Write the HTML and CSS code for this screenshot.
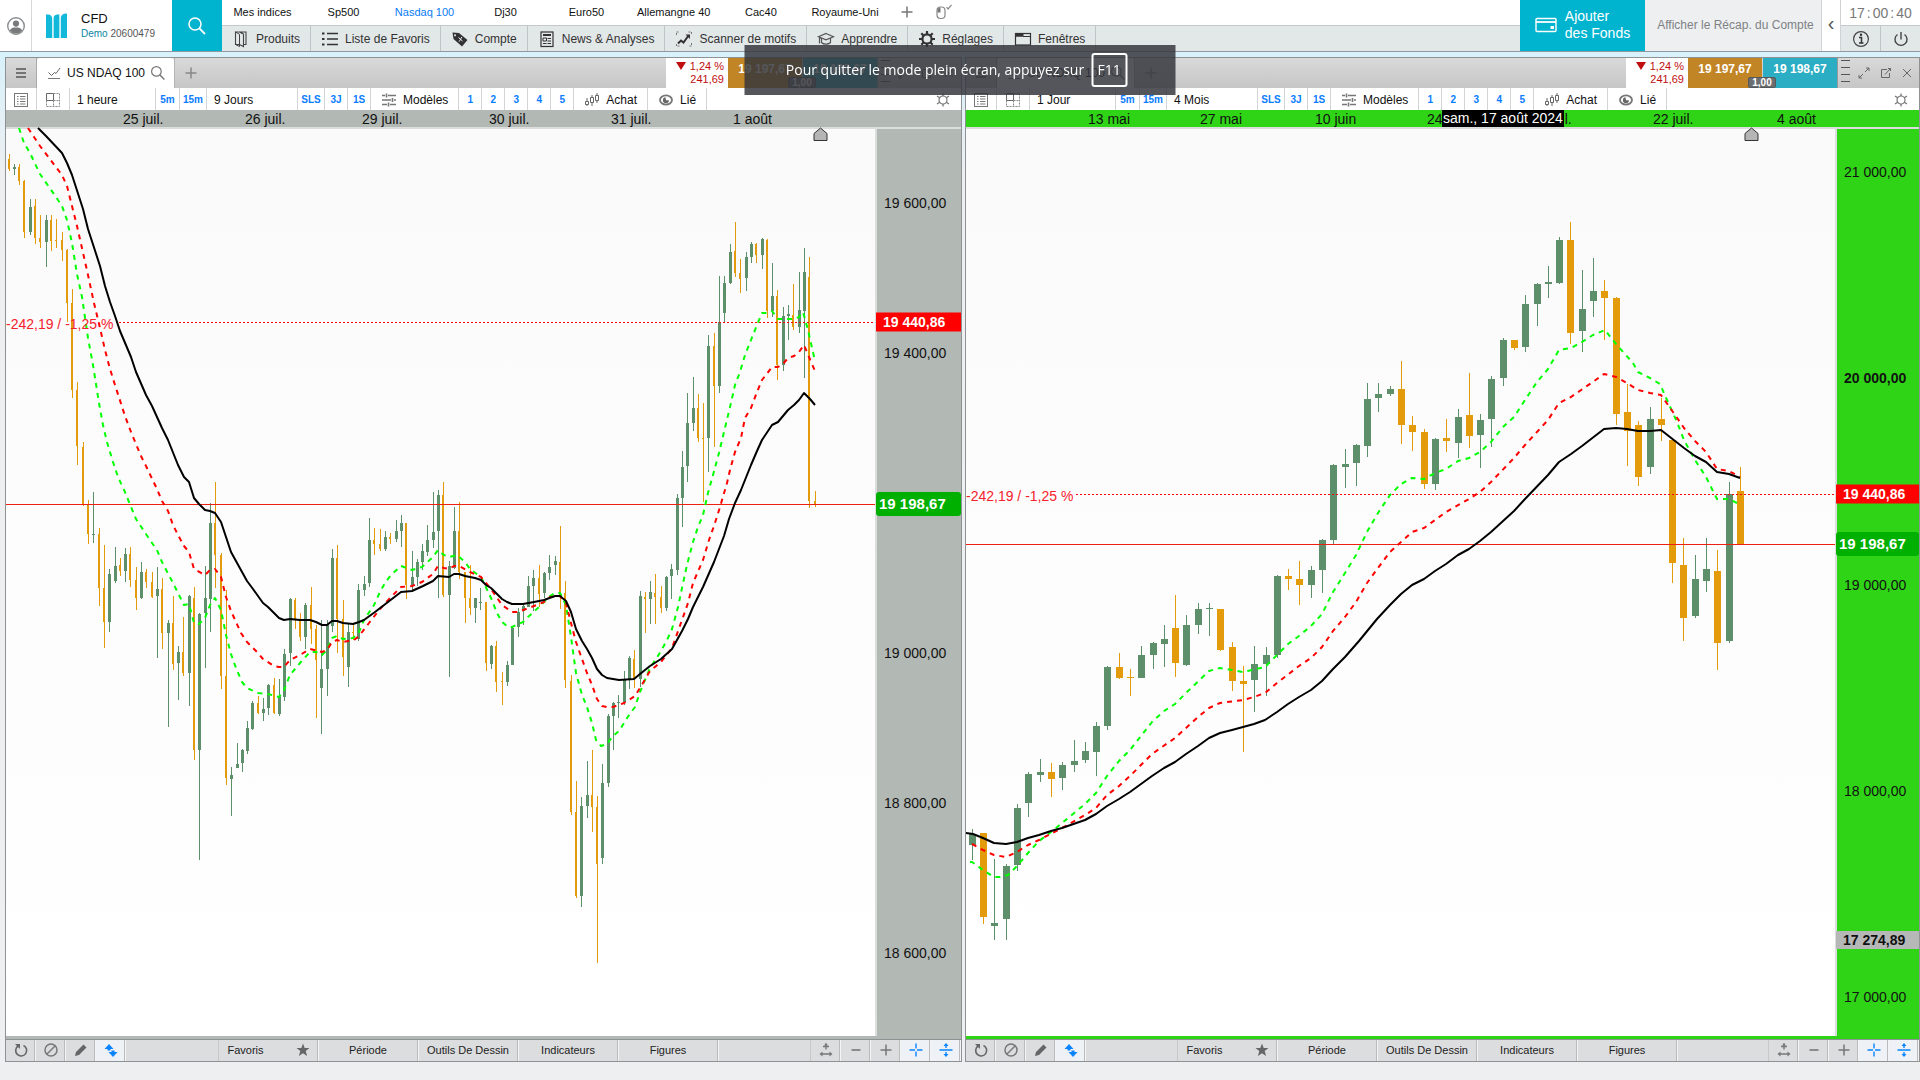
FILE: index.html
```html
<!DOCTYPE html>
<html lang="fr">
<head>
<meta charset="utf-8">
<title>US NDAQ 100 - CFD</title>
<link rel="stylesheet" href="styles.css">
</head>
<body>
<svg class="sprite" aria-hidden="true">
  <symbol id="i-user" viewBox="0 0 20 20"><circle cx="10" cy="10" r="8.3" fill="none" stroke="#8a8d8f" stroke-width="1.4"/><circle cx="10" cy="7.6" r="3.1" fill="#77797b"/><path d="M3.8 14.6c1.2-2.6 3-3 6.2-3s5 .4 6.200 3a8 8 0 0 1-12.400 0z" fill="#77797b"/></symbol>
  <symbol id="i-logo" viewBox="0 0 22 26"><path d="M0 1h2c3 0 4.500 1.500 4.500 5v19.500H0zM8 5c0-2.500 1-3.500 3.500-4H14v24.500H8zM15.500 5c0-3 1.500-4.500 5-5H22v25.500h-6.500z" fill="#12b8da"/></symbol>
  <symbol id="i-search" viewBox="0 0 20 20"><circle cx="8" cy="8" r="6" fill="none" stroke="currentColor" stroke-width="1.500"/><path d="M12.400 12.400l5.600 5.600" stroke="currentColor" stroke-width="1.800"/></symbol>
  <symbol id="i-plus" viewBox="0 0 12 12"><path d="M6 .5v11M.5 6h11" stroke="currentColor" stroke-width="1.500"/></symbol>
  <symbol id="i-mouse" viewBox="0 0 16 16"><rect x="1" y="3" width="8" height="11.500" rx="3.500" fill="none" stroke="#888" stroke-width="1.200"/><path d="M1.500 8.500V6c0-1.500 1-2.500 3-2.500v5z" fill="#777"/><path d="M10.500 3l1.600 2L15.500.8" fill="none" stroke="#888" stroke-width="1.200"/></symbol>
  <symbol id="i-book" viewBox="0 0 20 20"><path d="M4.500 3h4l4 2v12.500l-4-2H4.500zM8.500 3h6.500v12.500h-2.500" fill="none" stroke="#444" stroke-width="1.100"/><path d="M4.500 3l4 2.300V17.500l-4-2zM11 3v2" fill="none" stroke="#444"/></symbol>
  <symbol id="i-list" viewBox="0 0 20 20"><path d="M2 4.500h2.500M2 10h2.500M2 15.500h2.500" stroke="#333" stroke-width="2.200"/><path d="M7 4.500h11M7 10h11M7 15.500h11" stroke="#333" stroke-width="1.700"/></symbol>
  <symbol id="i-tag" viewBox="0 0 20 20"><path fill-rule="evenodd" d="M2.500 3.500l6.500.5 8.500 7-5.500 6.500-8.500-7.500zM5 5.200a1 1 0 1 0 .1 0z" fill="#333"/><path d="M8.500 8.500l4 3.500M11.800 8l-2.600 4.600" stroke="#e3e8ea"/></symbol>
  <symbol id="i-news" viewBox="0 0 20 20"><rect x="4" y="3" width="12" height="14.500" fill="none" stroke="#333" stroke-width="1.200"/><path d="M6 6h8" stroke="#333" stroke-width="2"/><path d="M6 9h3.500v3H6zM10.500 9.500H14M10.500 12H14M6 14.500h3.500M10.500 14.500H14" stroke="#333" fill="none"/></symbol>
  <symbol id="i-scan" viewBox="0 0 20 20"><path d="M2.500 6V3h3M14.500 3h3v3M17.500 14v3h-3M5.500 17h-3v-3" fill="none" stroke="#777" stroke-dasharray="2 1"/><path d="M4 14.500l3-3 2.500 2 5-7" fill="none" stroke="#333" stroke-width="2"/><path d="M11.500 5.500h4.500v4.500z" fill="#333"/></symbol>
  <symbol id="i-cap" viewBox="0 0 20 20"><path d="M10 4.500l7.500 3.200-7.500 3.200-7.500-3.200zM5.500 9.500v4c2 2.200 7 2.200 9 0v-4M3.500 8.500v6" fill="none" stroke="#555" stroke-width="1.200"/></symbol>
  <symbol id="i-gear" viewBox="0 0 20 20"><circle cx="10" cy="10" r="4.600" fill="none" stroke="#333" stroke-width="2.200"/><path d="M10 2v3M10 15v3M2 10h3M15 10h3M4.300 4.300l2.200 2.200M13.500 13.500l2.200 2.200M4.300 15.700l2.200-2.200M13.500 6.500l2.200-2.200" stroke="#333" stroke-width="2.200"/></symbol>
  <symbol id="i-window" viewBox="0 0 20 20"><rect x="2.500" y="4.500" width="15" height="11.500" fill="none" stroke="#333" stroke-width="1.200"/><path d="M2.500 6h8" stroke="#333" stroke-width="3.500"/><path d="M10 7.500h7.500" stroke="#333"/></symbol>
  <symbol id="i-wallet" viewBox="0 0 22 16"><rect x="1" y="1.500" width="20" height="13" rx="1" fill="none" stroke="#fff" stroke-width="1.400"/><path d="M1 5h20" stroke="#fff" stroke-width="1.800"/><rect x="15.500" y="9" width="3.500" height="3" fill="#fff"/></symbol>
  <symbol id="i-info" viewBox="0 0 20 20"><circle cx="10" cy="10" r="7.400" fill="none" stroke="#444" stroke-width="1.200"/><path d="M8 8.500h2.500V14M8 14h4.500" fill="none" stroke="#333" stroke-width="1.500"/><circle cx="10" cy="5.800" r="1.200" fill="#333"/></symbol>
  <symbol id="i-power" viewBox="0 0 20 20"><path d="M6.500 5.500a6 6 0 1 0 7 0M10 3v7.500" fill="none" stroke="#444" stroke-width="1.400"/></symbol>
  <symbol id="i-menu" viewBox="0 0 12 12"><path d="M1 2h10M1 6h10M1 10h10" stroke="#555" stroke-width="1.700"/></symbol>
  <symbol id="i-line" viewBox="0 0 14 14"><path d="M1.500 6.500l3 3 3-3 1.500 1L13 2" fill="none" stroke="#666"/><path d="M1 12.500h12" stroke="#777"/></symbol>
  <symbol id="i-rows" viewBox="0 0 16 16"><rect x="1.500" y="1.500" width="13" height="13" fill="none" stroke="#777"/><path d="M4 4.500h1.500M4 7h1.500M4 9.500h1.500M4 12h1.500M7 4.500h5.500M7 7h5.500M7 9.500h5.500M7 12h5.500" stroke="#777"/></symbol>
  <symbol id="i-grid" viewBox="0 0 16 16"><path d="M1.500 1.500h7v7h-7z" fill="none" stroke="#666"/><path d="M8.500 1.500h6v13h-13v-6M8.500 8.500v6M8.500 8.500h6" fill="none" stroke="#888" stroke-dasharray="2 1"/></symbol>
  <symbol id="i-sliders" viewBox="0 0 16 16"><path d="M1 3.500h3M7 3.500h8M1 8h9M13 8h2M1 12.500h5M9 12.500h6" stroke="#777" stroke-width="1.400"/><path d="M5.500 1.500v4M11.500 6v4M7.500 10.500v4" stroke="#777" stroke-width="1.600"/></symbol>
  <symbol id="i-candles" viewBox="0 0 16 16"><path d="M3 6v8M8 3v11M13 1v10" stroke="#666"/><path d="M1.500 9.500h3v3h-3zM6.500 5.500h3v5h-3zM11.500 3.500h3v5h-3z" fill="#fff" stroke="#666"/></symbol>
  <symbol id="i-link" viewBox="0 0 16 16"><ellipse cx="8" cy="8" rx="6" ry="4.600" fill="none" stroke="#777" stroke-width="1.800"/><path d="M7.500 5.200a3 3 0 1 0 3.400 3H8z" fill="#666"/></symbol>
  <symbol id="i-sun" viewBox="0 0 16 16"><circle cx="8" cy="8" r="4" fill="none" stroke="#777" stroke-width="1.200"/><path d="M8 1.500V4M8 12v2.500M2 4l3 2M11 10l3 2M2 12l3-2M11 6l3-2" stroke="#777" stroke-width="1.300"/></symbol>
  <symbol id="i-expand" viewBox="0 0 12 12"><path d="M7 5l4-4M8 1h3v3M5 7l-4 4M1 8v3h3" fill="none" stroke="#666"/></symbol>
  <symbol id="i-popout" viewBox="0 0 12 12"><path d="M7 2.500H1.500v8h8V6M5 7.500l5.500-6M8 1.500h2.500V4" fill="none" stroke="#666"/></symbol>
  <symbol id="i-close" viewBox="0 0 12 12"><path d="M2 2l8 8M10 2l-8 8" stroke="#666"/></symbol>
  <symbol id="i-refresh" viewBox="0 0 16 16"><path d="M5 4a5.500 5.500 0 1 0 5.500-.5" fill="none" stroke="#666" stroke-width="1.600"/><path d="M2 2h5v5z" fill="#666"/></symbol>
  <symbol id="i-ban" viewBox="0 0 16 16"><circle cx="8" cy="8" r="6" fill="none" stroke="#777" stroke-width="1.500"/><path d="M4 12l8-8" stroke="#777" stroke-width="1.500"/></symbol>
  <symbol id="i-pencil" viewBox="0 0 16 16"><path d="M2 14l1-4 7.500-7.500 3 3L6 13z" fill="#666"/></symbol>
  <symbol id="i-updown" viewBox="0 0 16 16"><path d="M1.500 7L6 2l4.500 5zM5.500 10L10 15l4.500-5z" fill="#0a84ff"/><path d="M6 6v2.500M10 8.500V11" stroke="#0a84ff" stroke-width="3"/></symbol>
  <symbol id="i-star" viewBox="0 0 16 16"><path d="M8 1.500l1.700 4.600h4.800l-3.800 3 1.400 4.900L8 11.200 3.900 14l1.400-4.900-3.800-3h4.800z" fill="#666"/></symbol>
  <symbol id="i-fit" viewBox="0 0 16 16"><path d="M8 1.500v6M5 4.500h6M3 12h10" stroke="#777" stroke-width="1.400"/><path d="M6 3.500l2-2.500 2 2.500zM1.500 12l3-2.500v5zM14.500 12l-3-2.500v5z" fill="#777"/></symbol>
  <symbol id="i-minus" viewBox="0 0 12 12"><path d="M1.500 6h9" stroke="currentColor" stroke-width="1.600"/></symbol>
  <symbol id="i-cross" viewBox="0 0 16 16"><path d="M8 1.500v5M8 9.500v5M1.500 8h5.500M9 8h5.500" stroke="#0a84ff" stroke-width="1.400"/></symbol>
  <symbol id="i-vfit" viewBox="0 0 16 16"><path d="M1.500 8h13M8 2v4M8 10v4" stroke="#0a84ff" stroke-width="1.400"/><path d="M5.500 4L8 1l2.500 3zM5.500 12L8 15l2.500-3z" fill="#0a84ff"/></symbol>
</svg>

<header class="top">
  <button class="user" aria-label="Profil"><svg class="ic20"><use href="#i-user"/></svg></button>
  <div class="brand">
    <svg class="logo"><use href="#i-logo"/></svg>
    <div><div class="brand-name">CFD</div><div class="brand-acct"><span>Demo</span> 20600479</div></div>
  </div>
  <button class="find" aria-label="Rechercher"><svg class="ic20"><use href="#i-search"/></svg></button>
  <div class="menus">
    <nav class="lists">
      <a href="#">Mes indices</a><a href="#">Sp500</a><a href="#" class="on">Nasdaq 100</a><a href="#">Dj30</a><a href="#">Euro50</a><a href="#">Allemangne 40</a><a href="#">Cac40</a><a href="#">Royaume-Uni</a>
      <button aria-label="Ajouter"><svg class="ic12"><use href="#i-plus"/></svg></button>
      <button aria-label="Souris"><svg class="ic16"><use href="#i-mouse"/></svg></button>
    </nav>
    <nav class="nav">
      <button><svg class="ic20"><use href="#i-book"/></svg>Produits</button>
      <button><svg class="ic20"><use href="#i-list"/></svg>Liste de Favoris</button>
      <button><svg class="ic20"><use href="#i-tag"/></svg>Compte</button>
      <button><svg class="ic20"><use href="#i-news"/></svg>News &amp; Analyses</button>
      <button><svg class="ic20"><use href="#i-scan"/></svg>Scanner de motifs</button>
      <button><svg class="ic20"><use href="#i-cap"/></svg>Apprendre</button>
      <button><svg class="ic20"><use href="#i-gear"/></svg>Réglages</button>
      <button><svg class="ic20"><use href="#i-window"/></svg>Fenêtres</button>
    </nav>
  </div>
  <button class="funds"><svg class="wallet"><use href="#i-wallet"/></svg><span>Ajouter<br>des Fonds</span></button>
  <button class="recap">Afficher le Récap. du Compte</button>
  <button class="fold" aria-label="Replier">‹</button>
  <div class="session">
    <div class="clock"><span>17</span><span>:</span><span>00</span><span>:</span><span>40</span></div>
    <div class="session-btns">
      <button aria-label="Info"><svg class="ic20"><use href="#i-info"/></svg></button>
      <button aria-label="Quitter"><svg class="ic20"><use href="#i-power"/></svg></button>
    </div>
  </div>
</header>

<main class="desk">
  <section class="panel" data-chart="hour">
    <div class="tabs">
      <button class="burger" aria-label="Menu"><svg class="ic12"><use href="#i-menu"/></svg></button>
      <div class="tab"><svg class="ic14"><use href="#i-line"/></svg><span>US NDAQ 100</span><svg class="ic16"><use href="#i-search"/></svg></div>
      <button class="addtab" aria-label="Nouvel onglet"><svg class="ic12"><use href="#i-plus"/></svg></button>
      <div class="quote">
        <div class="change"><span><i class="down"></i>1,24 %</span><span>241,69</span></div>
        <div class="deal"><button class="sell">19 197,67</button><button class="buy">19 198,67</button><span class="qty">1,00</span></div>
        <div class="depth"><i></i><i></i><i></i><i></i></div>
        <div class="winbtns"><button aria-label="Agrandir"><svg class="ic12"><use href="#i-expand"/></svg></button><button aria-label="Détacher"><svg class="ic12"><use href="#i-popout"/></svg></button><button aria-label="Fermer"><svg class="ic12"><use href="#i-close"/></svg></button></div>
      </div>
    </div>
    <div class="tools">
      <button class="w31" aria-label="Liste"><svg class="ic16"><use href="#i-rows"/></svg></button>
      <button class="w33" aria-label="Grille"><svg class="ic16"><use href="#i-grid"/></svg></button>
      <button class="wide">1 heure</button><button class="pre w24">5m</button><button class="pre w27">15m</button>
      <button class="span">9 Jours</button><button class="pre w27">SLS</button><button class="pre">3J</button><button class="pre">1S</button>
      <button class="lab"><svg class="ic16"><use href="#i-sliders"/></svg>Modèles</button>
      <button class="pre">1</button><button class="pre">2</button><button class="pre">3</button><button class="pre">4</button><button class="pre">5</button>
      <button class="lab"><svg class="ic16"><use href="#i-candles"/></svg>Achat</button>
      <button class="lab"><svg class="ic16"><use href="#i-link"/></svg>Lié</button>
      <button class="cfg" aria-label="Options"><svg class="ic16"><use href="#i-sun"/></svg></button>
    </div>
    <div class="chart">
      <div class="dates"></div>
      <div class="plot"></div>
      <div class="axis"></div>
    </div>
    <div class="foot">
      <button class="sq" aria-label="Rafraîchir"><svg class="ic16"><use href="#i-refresh"/></svg></button><button class="sq" aria-label="Masquer"><svg class="ic16"><use href="#i-ban"/></svg></button><button class="sq" aria-label="Dessiner"><svg class="ic16"><use href="#i-pencil"/></svg></button><button class="sq lit" aria-label="Ordres"><svg class="ic16"><use href="#i-updown"/></svg></button>
      <span class="gap"></span>
      <button class="fav">Favoris<svg class="ic16"><use href="#i-star"/></svg></button><button>Période</button><button>Outils De Dessin</button><button>Indicateurs</button><button>Figures</button>
      <span class="gap"></span>
      <button class="sq" aria-label="Ajuster"><svg class="ic16"><use href="#i-fit"/></svg></button><button class="sq" aria-label="Réduire"><svg class="ic12"><use href="#i-minus"/></svg></button><button class="sq" aria-label="Zoomer"><svg class="ic12"><use href="#i-plus"/></svg></button><button class="sq lit" aria-label="Réticule"><svg class="ic16"><use href="#i-cross"/></svg></button><button class="sq lit" aria-label="Échelle"><svg class="ic16"><use href="#i-vfit"/></svg></button>
    </div>
  </section>

  <section class="panel green" data-chart="day">
    <div class="tabs">
      <button class="burger" aria-label="Menu"><svg class="ic12"><use href="#i-menu"/></svg></button>
      <div class="tab"><svg class="ic14"><use href="#i-line"/></svg><span>US NDAQ 100</span><svg class="ic16"><use href="#i-search"/></svg></div>
      <button class="addtab" aria-label="Nouvel onglet"><svg class="ic12"><use href="#i-plus"/></svg></button>
      <div class="quote">
        <div class="change"><span><i class="down"></i>1,24 %</span><span>241,69</span></div>
        <div class="deal"><button class="sell">19 197,67</button><button class="buy">19 198,67</button><span class="qty">1,00</span></div>
        <div class="depth"><i></i><i></i><i></i><i></i></div>
        <div class="winbtns"><button aria-label="Agrandir"><svg class="ic12"><use href="#i-expand"/></svg></button><button aria-label="Détacher"><svg class="ic12"><use href="#i-popout"/></svg></button><button aria-label="Fermer"><svg class="ic12"><use href="#i-close"/></svg></button></div>
      </div>
    </div>
    <div class="tools">
      <button class="w31" aria-label="Liste"><svg class="ic16"><use href="#i-rows"/></svg></button>
      <button class="w33" aria-label="Grille"><svg class="ic16"><use href="#i-grid"/></svg></button>
      <button class="wide">1 Jour</button><button class="pre w24">5m</button><button class="pre w27">15m</button>
      <button class="span">4 Mois</button><button class="pre w27">SLS</button><button class="pre">3J</button><button class="pre">1S</button>
      <button class="lab"><svg class="ic16"><use href="#i-sliders"/></svg>Modèles</button>
      <button class="pre">1</button><button class="pre">2</button><button class="pre">3</button><button class="pre">4</button><button class="pre">5</button>
      <button class="lab"><svg class="ic16"><use href="#i-candles"/></svg>Achat</button>
      <button class="lab"><svg class="ic16"><use href="#i-link"/></svg>Lié</button>
      <button class="cfg" aria-label="Options"><svg class="ic16"><use href="#i-sun"/></svg></button>
    </div>
    <div class="chart">
      <div class="dates"></div>
      <div class="plot"></div>
      <div class="axis"></div>
    </div>
    <div class="foot">
      <button class="sq" aria-label="Rafraîchir"><svg class="ic16"><use href="#i-refresh"/></svg></button><button class="sq" aria-label="Masquer"><svg class="ic16"><use href="#i-ban"/></svg></button><button class="sq" aria-label="Dessiner"><svg class="ic16"><use href="#i-pencil"/></svg></button><button class="sq lit" aria-label="Ordres"><svg class="ic16"><use href="#i-updown"/></svg></button>
      <span class="gap"></span>
      <button class="fav">Favoris<svg class="ic16"><use href="#i-star"/></svg></button><button>Période</button><button>Outils De Dessin</button><button>Indicateurs</button><button>Figures</button>
      <span class="gap"></span>
      <button class="sq" aria-label="Ajuster"><svg class="ic16"><use href="#i-fit"/></svg></button><button class="sq" aria-label="Réduire"><svg class="ic12"><use href="#i-minus"/></svg></button><button class="sq" aria-label="Zoomer"><svg class="ic12"><use href="#i-plus"/></svg></button><button class="sq lit" aria-label="Réticule"><svg class="ic16"><use href="#i-cross"/></svg></button><button class="sq lit" aria-label="Échelle"><svg class="ic16"><use href="#i-vfit"/></svg></button>
    </div>
  </section>
</main>

<div class="toast" role="status"><span>Pour quitter le mode plein écran, appuyez sur</span><kbd>F11</kbd></div>
<script src="chart.js"></script>
</body>
</html>
```
FILE: styles.css
```css
* { box-sizing: border-box; }
body {
  margin: 0;
  min-height: 100vh;
  display: flex;
  flex-direction: column;
  background: #edeff1;
  color: #111;
  font: 12px/16px "Liberation Sans", Arial, sans-serif;
}
button {
  margin: 0;
  padding: 0;
  border: 0;
  background: none;
  color: inherit;
  font: inherit;
  display: flex;
  align-items: center;
  justify-content: center;
  white-space: nowrap;
}
a { color: inherit; text-decoration: none; }
svg { display: block; flex: none; }
.sprite { position: absolute; width: 0; height: 0; }
.ic12 { width: 12px; height: 12px; }
.ic14 { width: 14px; height: 14px; }
.ic16 { width: 16px; height: 16px; }
.ic20 { width: 20px; height: 20px; }

/* header */
.top { display: flex; height: 52px; background: #fff; border-bottom: 1px solid #8f989e; }
.user { width: 32px; border-right: 1px solid #d5d8da; }
.brand { width: 140px; display: flex; align-items: center; gap: 14px; padding-left: 14px; }
.logo { width: 21px; height: 26px; }
.brand-name { font-size: 13px; }
.brand-acct { font-size: 10px; line-height: 14px; color: #555; }
.brand-acct span { color: #0b86a0; }
.find { width: 50px; background: #00b3cf; color: #fff; }
.menus { flex: 1; display: flex; flex-direction: column; }
.lists { height: 26px; display: flex; align-items: center; padding-bottom: 1px; font-size: 11px; border-bottom: 1px solid #c3c8ca; }
.lists a { min-width: 81px; padding: 0 10px; text-align: center; white-space: nowrap; }
.lists .on { color: #0a7cf5; }
.lists button { width: 37px; color: #777; }
.nav { flex: 1; display: flex; background: #e2e7e8; color: #333; }
.nav button { padding: 0 10px 0 9px; gap: 5px; border-right: 1px solid #bfc5c7; }
.funds { width: 125px; gap: 8px; padding-bottom: 1px; background: #00b3cf; color: #fff; font-size: 14px; line-height: 17px; text-align: left; }
.wallet { width: 22px; height: 16px; }
.recap { width: 177px; padding: 0 0 2px 5px; background: #edeff1; color: #7f8284; border-right: 1px solid #d0d3d5; }
.fold { width: 19px; padding-bottom: 5px; font-size: 20px; color: #555; border-right: 1px solid #d0d3d5; }
.session { width: 79px; display: flex; flex-direction: column; }
.clock { height: 26px; display: flex; align-items: center; justify-content: center; gap: 2px; font-size: 14px; color: #777; border-bottom: 1px solid #c3c8ca; }
.session-btns { flex: 1; display: flex; background: #e2e7e8; }
.session-btns button { flex: 1; }
.session-btns button + button { border-left: 1px solid #bfc5c7; }

/* chart windows */
.desk {
  flex: 1;
  display: grid;
  grid-template-columns: 957fr 955fr;
  gap: 3px;
  padding: 5px 0 18px 5px;
  background: linear-gradient(#d8f1fb, #edeff1 120px);
}
.panel { --tone: #b2b8b4; --axis: 84px; --win: 69px; display: flex; flex-direction: column; min-width: 0; border: 1px solid #8e9295; background: #fff; }
.green { --tone: #30d417; --axis: 82px; --win: 67px; }
.tabs { height: 30px; display: flex; background: linear-gradient(#d9d9d9, #c6c6c6); }
.burger { width: 31px; border-right: 1px solid #aaa; }
.tab { width: 137px; display: flex; align-items: center; gap: 6px; padding-left: 10px; background: #fff; color: #111; white-space: nowrap; border-radius: 3px 3px 0 0; }
.tab .ic16 { color: #777; margin-left: -1px; }
.addtab { width: 32px; color: #888; border-left: 1px solid #b5b5b5; }
.quote { margin-left: auto; display: flex; }
.change { width: 62px; padding-right: 4px; background: #fff; color: #c00d0d; font-size: 11px; line-height: 13px; display: flex; flex-direction: column; justify-content: center; align-items: flex-end; }
.down { display: inline-block; margin-right: 4px; border: 5px solid transparent; border-top: 8px solid #c00d0d; border-bottom: 0; }
.deal { position: relative; display: grid; grid-template-columns: 74px 74px; gap: 1px; font-weight: bold; color: #fff; }
.sell { background: #c28525; padding-bottom: 8px; }
.buy { background: #2badc3; padding-bottom: 8px; }
.qty { position: absolute; left: 60px; bottom: 0; width: 28px; background: #6b6e70; border: 1px solid #55585a; border-radius: 2px; font-size: 10px; line-height: 9px; text-align: center; }
.depth { width: 15px; display: flex; flex-direction: column; gap: 6px; padding: 2px 2px 0 3px; border-left: 1px solid #999; }
.depth i { height: 1px; background: #555; }
.winbtns { width: var(--win); display: flex; align-items: center; justify-content: space-between; padding: 0 6px; }
.tools { height: 22px; display: flex; background: #fff; }
.tools button { padding-top: 1px; border-right: 1px solid #d3d6d8; }
.tools .pre { width: 23px; color: #0a7cff; font-size: 10px; font-weight: bold; }
.tools .w24 { width: 24px; }
.tools .w27 { width: 27px; }
.w31 { width: 31px; }
.w33 { width: 33px; }
.wide { width: 86px; }
.span { width: 91px; }
.tools .wide, .tools .span { justify-content: flex-start; padding-left: 7px; }
.tools .lab { gap: 6px; padding: 1px 10px 0; }
.tools .cfg { margin-left: auto; width: 36px; border: 0; }
.chart {
  flex: 1;
  display: grid;
  grid-template-columns: 1fr var(--axis);
  grid-template-rows: 17px 1fr;
  padding-bottom: 3px;
  background: var(--tone);
  font-size: 14px;
}
.dates { position: relative; margin-right: 2px; }
.dates span { position: absolute; line-height: 18px; white-space: nowrap; }
.dates .cursor { background: #000; color: #fff; padding: 0 1px; line-height: 17px; }
.plot { grid-row: 2; position: relative; border-top: 2px solid #dcdedd; border-right: 2px solid #dcdedd; background: linear-gradient(#fafafa, #fff); }
.plot svg { position: absolute; width: 100%; height: 100%; overflow: visible; }
.candles { shape-rendering: crispEdges; }
.delta { position: absolute; left: 0; color: #f5222d; line-height: 16px; }
.axis { grid-row: 2; position: relative; border-top: 2px solid #dcdedd; }
.axis span { position: absolute; left: 0; right: 0; padding-left: 7px; line-height: 18px; transform: translateY(-50%); white-space: nowrap; }
.axis .strong { font-weight: bold; }
.axis .close, .axis .last, .axis .mark { left: -1px; font-weight: bold; }
.axis .close { background: #f00; color: #fff; line-height: 19px; }
.axis .last { background: #00b000; color: #fff; font-size: 15px; line-height: 24px; padding-left: 3px; border-radius: 3px; }
.axis .mark { background: #b5b8b6; }
.foot { height: 22px; display: flex; border-top: 1px solid #8e9295; background: #dcdddf; font-size: 11px; color: #222; }
.foot button { width: 100px; padding-bottom: 1px; border-right: 1px solid #f4f4f4; box-shadow: inset -1px 0 #bbb; }
.foot .sq { width: 30px; color: #777; }
.foot .lit { background: #eef1f5; }
.foot .gap { flex: 1; border-right: 1px solid #c8c8c8; }
.foot .fav { justify-content: space-between; padding: 0 7px 1px 9px; }

/* full-screen hint */
.toast {
  position: fixed;
  top: 45px;
  left: 50%;
  transform: translateX(-50%);
  width: 431px;
  height: 50px;
  display: flex;
  align-items: center;
  justify-content: center;
  gap: 7px;
  padding-right: 7px;
  background: rgba(52, 54, 60, .84);
  color: #fff;
  font: 14px/20px "Open Sans", "Noto Sans", sans-serif;
  white-space: nowrap;
}
.toast kbd { width: 36px; height: 34px; border: 2px solid #fff; border-radius: 3px; font: inherit; line-height: 30px; text-align: center; }
```
FILE: chart.js
```js
// Candles: direction, high, low, body top, body bottom (plot units).
const HOUR = `d154,171,159,169 u164,175,167,169 d164,185,167,181 d180,238,181,232 u199,235,207,232 d199,244,206,238 d215,248,238,242 u215,267,220,242 d215,251,220,241 d219,248,240,241
d232,261,240,250 d249,322,250,303 d289,398,303,390 d382,465,390,446 d442,506,447,505 d500,544,504,534 u492,543,534,535 d528,606,534,588 d545,648,588,622 u569,632,574,622
u547,583,566,581 d558,576,565,571 u548,582,554,571 d547,587,554,580 d567,610,580,598 u562,599,572,598 d569,588,572,582 d572,598,582,597 u567,658,589,596 d578,649,589,633
u620,727,623,633 d596,670,623,664 u646,700,652,663 d617,676,652,673 u595,706,596,673 d587,760,598,750 u613,860,614,750 u566,668,598,613 u503,632,523,599 d482,588,523,555
d553,689,555,676 d590,785,676,778 u767,816,775,779 u743,768,764,768 u749,772,750,763 u721,754,728,751 u701,730,703,729 d696,714,703,713 u698,721,709,713 u684,715,685,708
d678,714,685,713 u679,716,696,714 u649,701,654,697 u598,666,599,653 d598,629,600,620 d613,641,619,637 u603,649,605,637 d587,644,605,629 d625,718,629,660 u620,734,669,688
u620,696,625,669 u549,632,558,626 d545,653,558,619 d600,676,619,657 u624,687,632,667 d624,640,632,633 u584,641,590,639 u576,596,584,590 u518,587,540,583 d528,555,540,544
d529,551,544,549 u531,551,537,549 d533,544,537,539 u520,542,531,539 u515,547,523,531 d523,599,523,585 u551,592,577,585 u559,586,562,577 u544,570,551,562 u525,556,540,552
u492,548,532,540 u490,598,495,531 d482,597,495,595 u561,677,566,595 u507,569,531,568 d502,579,531,572 d572,623,572,598 d565,615,598,608 u598,623,598,608 u588,610,602,603
d602,671,602,663 u645,669,646,664 d641,692,646,682 d672,705,681,682 u661,686,665,682 u627,665,628,665 u608,637,612,627 u604,625,606,611 u576,607,586,607 u570,611,578,586
d565,607,578,594 u572,598,573,593 u555,580,567,573 u556,575,561,565 d526,609,562,595 d581,688,593,680 d675,815,681,812 d781,898,812,896 u797,907,806,896 u761,818,795,806
d750,832,795,807 d796,963,807,864 u764,864,783,858 u714,787,716,783 u702,750,703,716 u695,718,702,703 u671,705,680,702 u656,689,658,679 d650,688,659,679 u591,687,596,679
d592,633,597,599 u581,624,592,599 d574,624,593,597 d586,613,597,608 u576,611,577,608 u564,599,569,576 u494,575,498,570 u451,527,467,498 u393,482,423,466 u377,431,408,423
d394,442,408,438 d403,502,438,439 u335,472,346,438 d333,447,346,386 u276,393,322,386 u276,322,283,313 u244,284,252,283 d222,277,251,273 d259,293,273,279 u252,291,257,278
u242,263,244,257 d243,263,244,255 u238,269,239,255 d239,318,240,311 u263,317,296,311 d290,380,296,365 u307,371,316,365 u305,340,314,316 d284,330,315,327 u272,333,310,327
u248,378,272,311 d257,508,277,501 d491,507,501,504`;

const DAY = `u829,860,834,845 d833,924,833,917 u859,940,923,926 u864,940,866,919 u804,871,808,865 u772,817,774,803 u759,782,772,775 d763,797,772,779 u762,790,765,778 u740,772,761,765
u742,763,751,760 u722,776,726,752 u666,730,667,726 d653,679,667,678 d669,696,677,678 u646,678,655,678 u642,669,643,655 u625,667,639,644 d595,677,628,663 u615,666,625,665
u603,634,609,625 u603,636,608,609 d609,651,609,650 d642,691,647,681 d666,752,681,684 u646,712,664,680 u647,696,655,664 u575,658,576,655 d569,590,576,579 d561,605,579,585
u566,598,570,585 u539,593,540,570 u464,544,465,540 u449,488,464,467 u444,486,445,463 u383,457,399,446 u383,412,394,398 u386,396,389,394 d361,444,389,425 d416,451,425,432
d429,489,432,484 u438,490,439,484 d419,452,438,441 u409,458,417,443 d373,448,415,436 u414,468,420,435 u376,447,379,419 u338,386,340,378 d340,350,340,348 u295,352,304,347
u283,326,284,304 u266,298,282,284 u237,284,240,283 d222,344,240,333 u270,352,309,331 u258,317,291,301 d280,340,291,298 d297,425,298,414 d384,466,412,431 d421,486,425,477
u407,474,419,467 d398,441,419,425 d440,583,440,563 d538,641,565,618 u555,618,579,616 u538,592,569,581 d550,670,571,643 u482,643,494,641 d467,544,491,544`;

const CHARTS = {
  hour: {
    left: 6, first: 9, step: 5.303, up: [-1, 3], down: [-1, 2],
    data: HOUR, y: p => 203 + (19600 - p) * 0.75, marker: 820, dotsFrom: 119,
    dates: [[123, '25 juil.'], [245, '26 juil.'], [362, '29 juil.'], [489, '30 juil.'], [611, '31 juil.'], [733, '1 août']],
    prices: [[19600], [19400], [19000], [18800], [18600], [19440.86, 'close'], [19198.67, 'last']],
    slow: '38,128 46,136 62,153 67,163 72,175 83,209 88,229 100,266 105,286 110,302 115,316 120,331 131,357 136,372 146,395 152,406 162,428 168,440 178,465 184,477 189,482 194,498 199,504 205,510 210,511 215,513 221,522 231,552 247,581 253,589 263,603 268,607 279,618 284,620 290,619 300,620 310,620 316,622 322,625 327,625 332,621 337,621 343,623 353,624 359,622 364,620 375,612 401,592 412,591 423,586 433,581 438,576 449,577 454,574 459,574 465,576 475,578 481,580 486,585 491,588 502,599 507,602 512,604 523,604 534,602 544,600 555,596 560,596 566,601 571,612 576,629 582,641 587,649 592,658 597,669 602,675 607,678 619,680 634,679 640,674 650,666 661,659 672,649 682,631 688,619 693,607 703,587 714,562 724,536 729,519 735,503 741,490 751,465 757,451 762,440 772,425 778,422 788,410 794,405 799,400 804,393 810,399 815,405',
    mid: '28,128 34,137 40,146 62,175 67,186 72,206 77,226 88,275 94,303 100,328 105,350 110,369 115,385 125,416 131,432 136,444 141,456 146,466 157,489 162,501 168,511 173,525 178,535 184,546 189,552 194,569 205,575 210,570 215,569 221,577 226,597 231,611 236,622 241,633 247,642 258,653 263,659 274,666 279,667 284,667 290,660 300,655 310,649 322,652 327,650 332,642 337,640 343,642 354,640 359,636 369,623 380,609 390,598 401,587 412,586 422,582 433,574 438,566 444,568 449,569 454,566 459,566 470,572 481,577 491,589 502,605 512,612 518,612 534,606 544,602 550,597 560,596 566,603 571,623 576,642 582,659 587,673 592,685 597,699 602,706 607,707 613,707 624,703 629,700 635,696 640,688 650,671 661,662 672,648 682,620 688,603 693,583 703,560 709,540 714,526 720,507 727,483 730,470 735,452 741,438 745,418 751,408 757,392 762,380 772,367 778,367 783,364 788,358 794,356 799,352 804,345 809,357 815,371',
    fast: '19,128 24,143 30,153 40,174 56,197 62,206 67,220 72,243 77,274 82,297 88,338 93,365 99,403 103,425 107,442 113,462 118,477 125,492 131,507 136,519 146,534 152,543 157,550 162,562 173,583 184,605 189,604 194,623 199,624 205,618 210,605 215,598 221,610 226,635 231,654 236,668 242,682 247,688 258,693 268,694 279,697 284,690 290,675 300,663 310,652 316,652 322,655 327,650 332,638 337,636 343,639 353,638 359,632 364,620 374,605 380,592 385,583 391,575 401,566 412,570 422,567 433,557 438,550 444,555 449,557 457,555 465,562 470,569 481,577 491,598 497,613 502,622 508,627 512,627 523,622 528,617 539,607 550,596 555,593 560,593 566,605 571,637 576,673 582,695 587,707 592,723 596,740 601,746 607,744 613,736 619,731 629,715 635,707 640,692 650,668 656,659 661,651 667,640 672,629 678,607 682,588 687,565 693,542 698,527 703,515 708,493 713,475 719,453 724,432 730,407 735,385 740,372 745,355 751,340 757,325 762,313 767,313 772,311 778,319 788,319 794,319 799,317 803,312 808,330 815,361'
  },
  day: {
    left: 966, first: 972.4, step: 11.294, up: [-3, 7], down: [-3, 7],
    data: DAY, y: p => 172 + (21000 - p) * 0.2063, marker: 1751, dotsFrom: 1076,
    dates: [[1088, '13 mai'], [1200, '27 mai'], [1315, '10 juin'], [1427, '24 juin'], [1539, '8 juil.'], [1653, '22 juil.'], [1777, '4 août'], [1442, 'sam., 17 août 2024', 'cursor']],
    prices: [[21000], [20000, 'strong'], [19000], [18000], [17000], [19440.86, 'close'], [19198.67, 'last'], [17274.89, 'mark']],
    slow: '966,833 973,834 983,838 994,843 1006,844 1017,842 1028,838 1039,835 1051,831 1062,828 1085,820 1096,814 1107,806 1119,799 1130,792 1141,784 1152,776 1164,768 1175,762 1186,754 1198,746 1209,738 1220,733 1232,730 1243,727 1254,724 1265,720 1277,712 1288,704 1299,697 1311,690 1322,681 1333,669 1345,657 1359,641 1377,619 1390,605 1401,594 1412,585 1424,579 1435,571 1446,564 1458,555 1469,549 1480,541 1491,532 1514,511 1525,499 1548,475 1559,462 1571,454 1582,446 1604,429 1616,428 1627,429 1638,431 1650,431 1661,430 1684,448 1695,456 1706,462 1717,472 1729,474 1740,478',
    mid: '972,844 983,850 994,855 1006,857 1017,852 1028,845 1039,840 1062,828 1085,815 1096,808 1107,795 1119,786 1130,776 1152,754 1175,738 1198,717 1209,708 1220,703 1243,700 1254,697 1265,693 1277,683 1299,666 1311,658 1322,647 1333,631 1345,617 1356,602 1367,583 1378,568 1390,552 1412,532 1424,528 1446,512 1469,499 1480,492 1491,482 1514,458 1525,445 1548,420 1559,403 1571,397 1597,379 1604,374 1616,377 1627,383 1638,390 1650,393 1661,395 1673,412 1684,428 1695,441 1706,452 1717,469 1729,471 1740,477',
    fast: '970,862 972,862 983,870 994,877 1000,877 1008,875 1017,866 1028,853 1039,841 1051,832 1062,823 1073,814 1085,804 1096,793 1107,776 1119,761 1130,750 1152,722 1164,711 1175,704 1186,693 1209,671 1220,668 1232,670 1243,672 1265,667 1277,655 1288,644 1299,636 1311,626 1322,614 1333,592 1345,573 1356,555 1367,532 1378,513 1390,495 1401,484 1412,478 1424,479 1435,473 1446,469 1458,461 1469,458 1480,452 1491,442 1503,427 1514,417 1525,400 1537,382 1548,369 1559,350 1571,348 1582,342 1593,335 1605,330 1616,344 1633,363 1638,372 1650,378 1660,384 1667,400 1677,422 1684,440 1695,460 1706,477 1717,499 1729,499 1737,503'
  }
};

const TOP = 129, W = 869, H = 907;
const fmt = p => p.toLocaleString('fr-FR', { minimumFractionDigits: 2 }).replace(/\u202f/g, '\u00a0');
const pct = v => (v * 100).toFixed(3) + '%';

document.querySelectorAll('[data-chart]').forEach(panel => {
  const c = CHARTS[panel.dataset.chart];
  const candles = c.data.trim().split(/\s+/).map((s, i) => {
    const up = s[0] === 'u';
    const [hi, lo, a, b] = s.slice(1).split(',').map(Number);
    const x = Math.floor(c.first + i * c.step);
    const [dx, w] = up ? c.up : c.down;
    return `<path fill="${up ? '#5c8f6a' : '#e39b0b'}" d="M${x} ${hi}h1V${lo}h-1zM${x + dx} ${a}h${w}V${b}h-${w}z"/>`;
  }).join('');
  const right = c.left + W, close = Math.round(c.y(19440.86)), last = Math.round(c.y(19198.67)), m = c.marker;
  panel.querySelector('.plot').innerHTML = `
    <svg viewBox="${c.left} ${TOP} ${W} ${H}" preserveAspectRatio="none">
      <g class="candles">${candles}
        <path d="M${c.dotsFrom} ${close + .5}H${right}" stroke="#f00" stroke-dasharray="2 2"/>
        <path d="M${c.left} ${last + .5}H${right}" stroke="#ee2010"/></g>
      <g fill="none" stroke-width="2" stroke-linejoin="round">
        <polyline points="${c.fast}" stroke="#0f0" stroke-dasharray="5 5"/>
        <polyline points="${c.mid}" stroke="#f00" stroke-dasharray="5 5"/>
        <polyline points="${c.slow}" stroke="#000"/></g>
      <path d="M${m - 6} 140.5v-7l6.5-5.5 6.500 5.500v7z" fill="#b5b5b5" stroke="#333"/>
    </svg>
    <div class="delta" style="top:${pct((close - 6 - TOP) / H)}">-242,19 / -1,25 %</div>`;
  panel.querySelector('.dates').innerHTML = c.dates.map(([x, t, k]) =>
    `<span class="${k || ''}" style="left:${pct((x - c.left) / W)}">${t}</span>`).join('');
  panel.querySelector('.axis').innerHTML = c.prices.map(([p, k]) =>
    `<span class="${k || ''}" style="top:${pct((c.y(p) - TOP) / H)}">${fmt(p)}</span>`).join('');
});
```
